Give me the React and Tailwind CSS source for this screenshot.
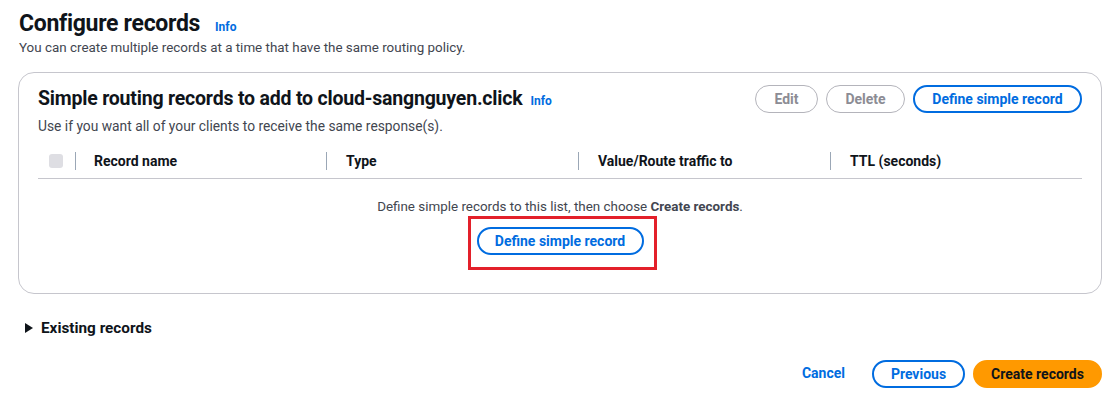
import React from "react";

const font = { fontFamily: "Roboto, 'Noto Sans', Arial, sans-serif" };

function Pill({ children, variant = "normal", className = "" }) {
  const styles = {
    normal: "border-2 border-[#006ce0] text-[#006ce0] bg-white",
    disabled: "border border-[#b4b4bb] text-[#8c8c94] bg-white",
    primary: "border-2 border-[#ff9900] bg-[#ff9900] text-[#0f141a]",
  };
  return (
    <button
      className={`h-[28px] rounded-full text-[14px] font-bold leading-none whitespace-nowrap flex items-center justify-center ${styles[variant]} ${className}`}
    >
      {children}
    </button>
  );
}

function Th({ children }) {
  return (
    <div className="flex items-center h-[22px]">
      <div className="w-px h-[18px] bg-[#9ba7b6] mr-[19px]" />
      <span className="text-[14px] font-bold text-[#0f141a]">{children}</span>
    </div>
  );
}

export default function App() {
  return (
    <div className="w-[1115px] h-[417px] bg-white text-[#0f141a] overflow-hidden" style={font}>
      <div className="pl-[19px] pr-[13px]">
        <div className="flex items-baseline gap-[15px] pt-[8px]">
          <h1 className="text-[23px] font-bold tracking-[-0.3px] leading-[32px]">Configure records</h1>
          <span className="text-[12px] font-bold text-[#006ce0]">Info</span>
        </div>
        <p className="text-[13.4px] text-[#424650] leading-[18px] -mt-[1px]">
          You can create multiple records at a time that have the same routing policy.
        </p>

        <div className="mt-[15px] -ml-px border border-[#c6c6cd] rounded-[16px] pl-[19px] pr-[19px] pt-[12px] h-[222px]">
          <div className="flex items-start justify-between">
            <div>
              <div className="flex items-baseline gap-[8px] pt-[2px]">
                <h2 className="text-[19.5px] font-bold leading-[24px] tracking-[-0.2px]">
                  Simple routing records to add to cloud-sangnguyen.click
                </h2>
                <span className="text-[12px] font-bold text-[#006ce0]">Info</span>
              </div>
              <p className="text-[13.8px] text-[#424650] leading-[18px] mt-[6px]">
                Use if you want all of your clients to receive the same response(s).
              </p>
            </div>
            <div className="flex gap-[8px]">
              <Pill variant="disabled" className="w-[63px]">Edit</Pill>
              <Pill variant="disabled" className="w-[79px]">Delete</Pill>
              <Pill className="w-[169px]">Define simple record</Pill>
            </div>
          </div>

          <div className="mt-[15px] border-b border-[#c6c6cd] pb-[6px] grid grid-cols-[288px_252px_252px_1fr] items-center">
            <div className="flex items-center">
              <div className="ml-[11px] w-[14px] h-[14px] rounded-[3px] bg-[#dedee3]" />
              <div className="w-px h-[18px] bg-[#9ba7b6] ml-[12px]" />
              <span className="ml-[18px] text-[14px] font-bold">Record name</span>
            </div>
            <Th>Type</Th>
            <Th>Value/Route traffic to</Th>
            <Th>TTL (seconds)</Th>
          </div>

          <div className="flex flex-col items-center pt-[19px]">
            <p className="text-[13.4px] text-[#424650] leading-[18px]">
              Define simple records to this list, then choose <span className="font-bold">Create records</span>.
            </p>
            <div className="ml-[4px] border-[3px] border-[#e3202a] pl-[6px] pr-[10px] pt-[8px] pb-[12px]">
              <Pill className="w-[167px]">Define simple record</Pill>
            </div>
          </div>
        </div>

        <div className="flex items-center mt-[23px] ml-[6px]">
          <svg width="8" height="10" viewBox="0 0 8 10">
            <path d="M0 0 L8 5 L0 10 Z" fill="#0f141a" />
          </svg>
          <span className="ml-[8px] text-[15.3px] font-bold">Existing records</span>
        </div>

        <div className="flex justify-end items-center gap-[8px] mt-[20px]">
          <span className="text-[14px] font-bold text-[#006ce0] mr-[19px]">Cancel</span>
          <Pill className="w-[93px]">Previous</Pill>
          <Pill variant="primary" className="w-[129px]">Create records</Pill>
        </div>
      </div>
    </div>
  );
}
